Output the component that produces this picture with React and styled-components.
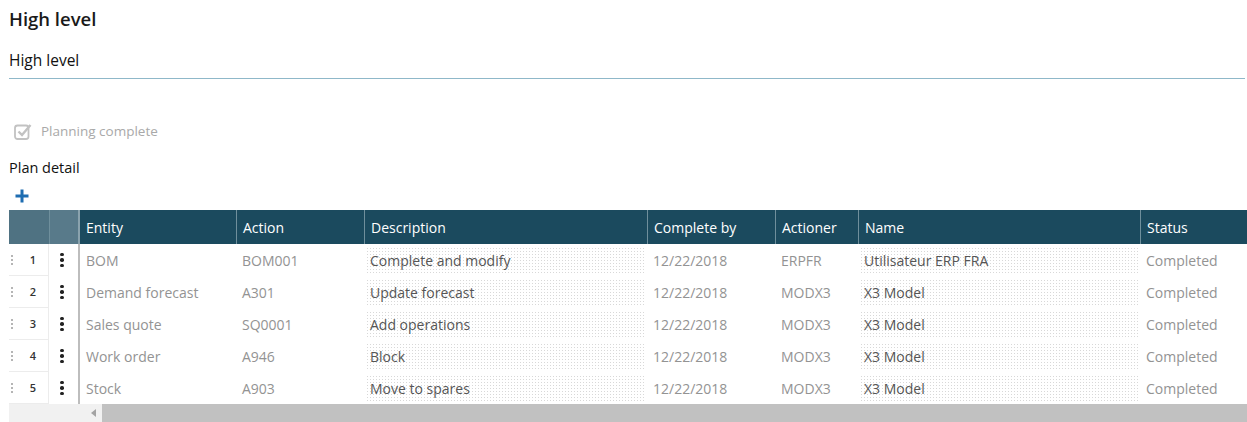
import React from "react";
import styled, { createGlobalStyle } from "styled-components";

const GlobalStyle = createGlobalStyle`
  html, body {
    margin: 0;
    padding: 0;
    background: #fff;
    font-family: "Open Sans", "Liberation Sans", sans-serif;
    overflow: hidden;
  }
`;

const Page = styled.div`
  padding: 6px 0 0 9px;
  width: 1238px;
`;

const Title = styled.h1`
  margin: 0;
  font-size: 18.5px;
  line-height: 26px;
  font-weight: 600;
  color: #1a1a1a;
`;

const SectionTitle = styled.h2`
  margin: 16px 2px 0 0;
  font-size: 15.5px;
  line-height: 24px;
  font-weight: 500;
  color: #111;
  padding-bottom: 6px;
  border-bottom: 1px solid #8fb8c9;
`;

const CheckRow = styled.label`
  display: flex;
  align-items: center;
  gap: 9px;
  margin: 42px 0 0 5px;
  height: 20px;
  font-size: 13.5px;
  color: #a9a9a9;
`;

const BlockTitle = styled.div`
  margin-top: 17px;
  font-size: 14.5px;
  line-height: 20px;
  color: #111;
`;

const AddButton = styled.button`
  display: flex;
  border: 0;
  background: none;
  padding: 0;
  margin: 11px 0 0 6px;
  width: 14px;
  height: 14px;
  cursor: pointer;
`;

const Grid = styled.div`
  margin-top: 7px;
  width: 1238px;
  overflow: hidden;
`;

const cols = "40px 31px 156px 128px 283px 128px 83px 282px 107px";

const HeadRow = styled.div`
  display: grid;
  grid-template-columns: ${cols};
  height: 34px;
  background: #1b4a5e;
`;

const HeadCell = styled.div`
  display: flex;
  align-items: center;
  padding-left: 6px;
  color: #fff;
  font-size: 14px;
  background: ${p => p.$bg || "transparent"};
  border-left: ${p => (p.$first ? "none" : "1px solid #6f8f9c")};
  border-right: ${p => (p.$gutter ? "2px solid #8aa3ae" : "none")};
`;

const BodyRow = styled.div`
  display: grid;
  grid-template-columns: ${cols};
  height: 32px;
`;

const NumCell = styled.div`
  display: flex;
  align-items: center;
  justify-content: space-between;
  padding: 0 12px 0 2px;
  border-bottom: 1px solid #ececec;
  border-right: 1px solid #ececec;
  font-size: 11px;
  font-weight: 600;
  color: #333;
`;

const Handle = styled.span`
  width: 2px;
  height: 12px;
  background-image: radial-gradient(circle, #b5b5b5 0.9px, transparent 1px);
  background-size: 2px 4px;
`;

const MenuCell = styled.div`
  display: flex;
  align-items: center;
  justify-content: center;
  border-right: 2px solid #bdbdbd;
  padding-right: 3px;
`;

const Kebab = styled.span`
  display: flex;
  flex-direction: column;
  gap: 2px;
  & > i {
    display: block;
    width: 3.5px;
    height: 3.5px;
    border-radius: 50%;
    background: #222;
  }
`;

const Cell = styled.div`
  display: flex;
  align-items: center;
  padding-left: 6px;
  font-size: 14px;
  color: #939393;
  white-space: nowrap;
  overflow: hidden;
`;

const FieldCell = styled.div`
  padding: 3px 2px 3px 2px;
  display: flex;
`;

const Field = styled.div`
  flex: 1;
  display: flex;
  align-items: center;
  padding-left: 4px;
  font-size: 14px;
  color: #555;
  white-space: nowrap;
  background-image: radial-gradient(circle, #d8d8d8 0.7px, transparent 0.8px);
  background-size: 3px 3px;
`;

const ScrollBar = styled.div`
  display: flex;
  height: 18px;
  background: #f1f1f1;
`;

const ScrollArrow = styled.span`
  width: 93px;
  display: flex;
  align-items: center;
  justify-content: flex-end;
  padding-right: 6px;
  box-sizing: border-box;
  & > svg {
    display: block;
  }
`;

const ScrollThumb = styled.div`
  flex: 1;
  background: #c1c1c1;
`;

const CheckIcon = () => (
  <svg width="18" height="18" viewBox="0 0 18 18">
    <rect x="1" y="3.5" width="13.5" height="13.5" rx="2.5" fill="none" stroke="#c2c2c2" strokeWidth="1.8" />
    <path d="M4.5 9.5 L8 13 L16.5 3" fill="none" stroke="#c2c2c2" strokeWidth="2.4" />
  </svg>
);

const PlusIcon = () => (
  <svg width="14" height="14" viewBox="0 0 14 14">
    <path d="M7 0.5 V13.5 M0.5 7 H13.5" stroke="#1e6db1" strokeWidth="3" />
  </svg>
);

const headers = ["Entity", "Action", "Description", "Complete by", "Actioner", "Name", "Status"];

const rows = [
  ["BOM", "BOM001", "Complete and modify", "12/22/2018", "ERPFR", "Utilisateur ERP FRA", "Completed"],
  ["Demand forecast", "A301", "Update forecast", "12/22/2018", "MODX3", "X3 Model", "Completed"],
  ["Sales quote", "SQ0001", "Add operations", "12/22/2018", "MODX3", "X3 Model", "Completed"],
  ["Work order", "A946", "Block", "12/22/2018", "MODX3", "X3 Model", "Completed"],
  ["Stock", "A903", "Move to spares", "12/22/2018", "MODX3", "X3 Model", "Completed"],
];

export default function App() {
  return (
    <Page>
      <GlobalStyle />
      <Title>High level</Title>
      <SectionTitle>High level</SectionTitle>
      <CheckRow>
        <CheckIcon />
        Planning complete
      </CheckRow>
      <BlockTitle>Plan detail</BlockTitle>
      <AddButton aria-label="Add">
        <PlusIcon />
      </AddButton>
      <Grid>
        <HeadRow>
          <HeadCell $first $bg="#4f7282" />
          <HeadCell $bg="#587a8a" $gutter />
          {headers.map((h, i) => (
            <HeadCell key={h} $first={i === 0}>{h}</HeadCell>
          ))}
        </HeadRow>
        {rows.map((r, i) => (
          <BodyRow key={i}>
            <NumCell>
              <Handle />
              {i + 1}
            </NumCell>
            <MenuCell>
              <Kebab><i /><i /><i /></Kebab>
            </MenuCell>
            <Cell>{r[0]}</Cell>
            <Cell>{r[1]}</Cell>
            <FieldCell><Field>{r[2]}</Field></FieldCell>
            <Cell>{r[3]}</Cell>
            <Cell>{r[4]}</Cell>
            <FieldCell><Field>{r[5]}</Field></FieldCell>
            <Cell>{r[6]}</Cell>
          </BodyRow>
        ))}
        <ScrollBar>
          <ScrollArrow>
            <svg width="5" height="8" viewBox="0 0 5 8">
              <path d="M5 0 V8 L0 4 Z" fill="#a3a3a3" />
            </svg>
          </ScrollArrow>
          <ScrollThumb />
        </ScrollBar>
      </Grid>
    </Page>
  );
}
